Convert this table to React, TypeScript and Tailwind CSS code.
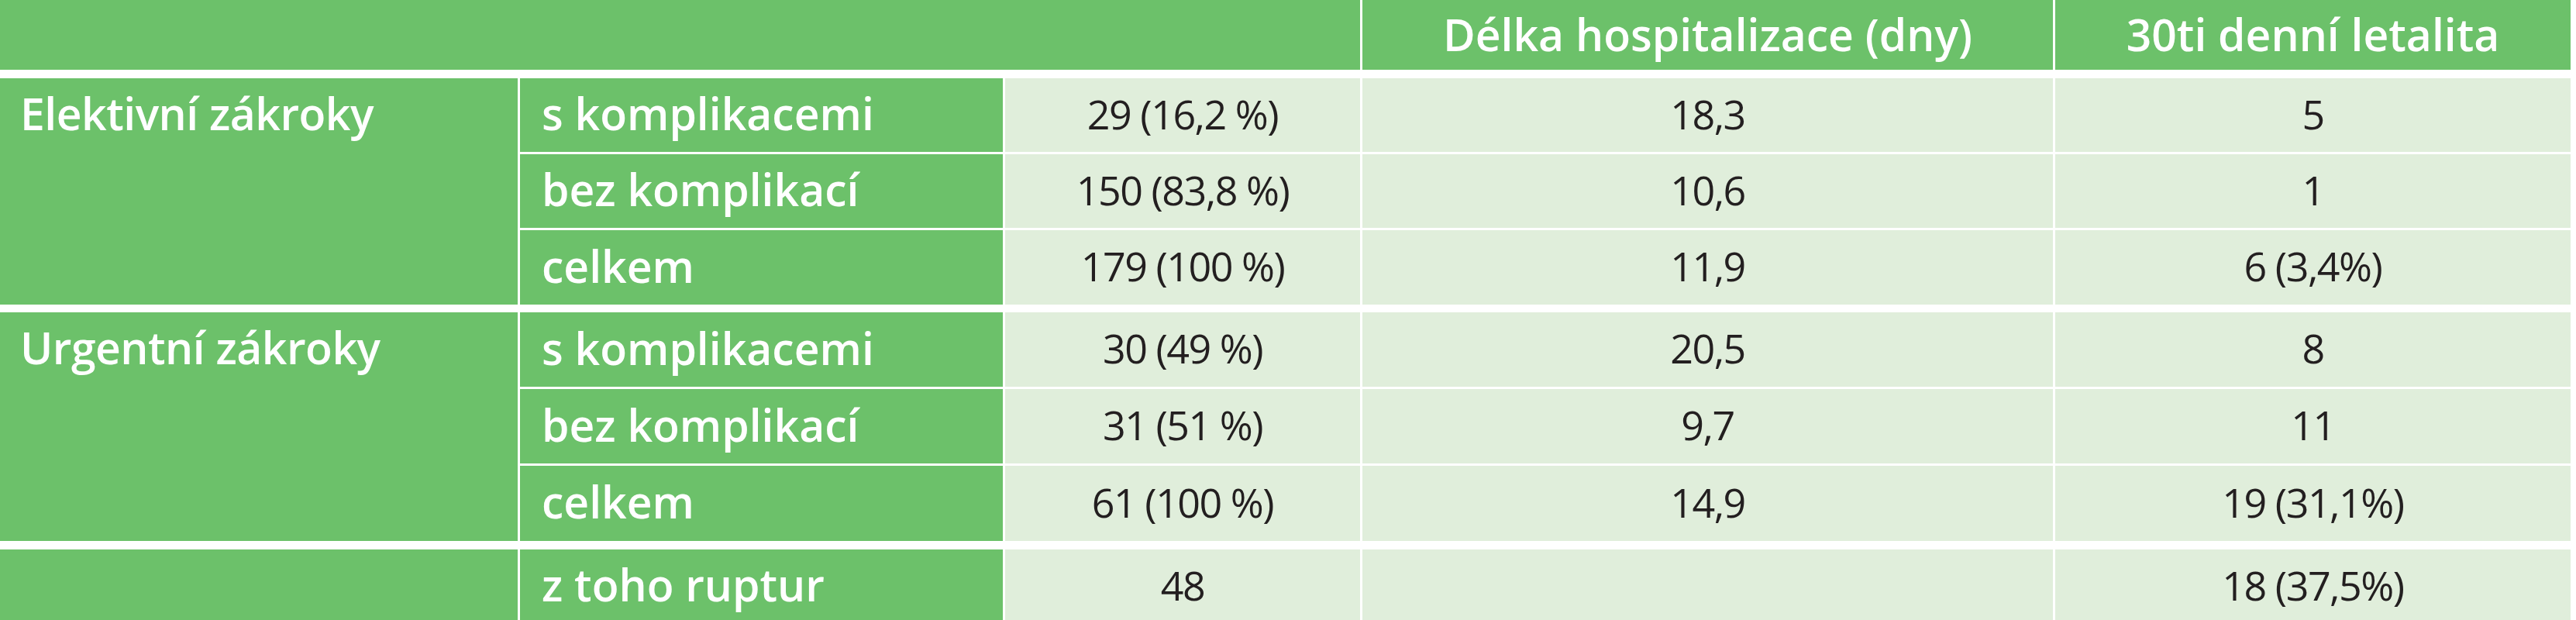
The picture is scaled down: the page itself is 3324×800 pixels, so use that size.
import React from "react";

type Row = { label: string; n: string; los: string; mort: string };

const groups: { title: string; rows: Row[] }[] = [
  {
    title: "Elektivní zákroky",
    rows: [
      { label: "s komplikacemi", n: "29 (16,2 %)", los: "18,3", mort: "5" },
      { label: "bez komplikací", n: "150 (83,8 %)", los: "10,6", mort: "1" },
      { label: "celkem", n: "179 (100 %)", los: "11,9", mort: "6 (3,4%)" },
    ],
  },
  {
    title: "Urgentní zákroky",
    rows: [
      { label: "s komplikacemi", n: "30 (49 %)", los: "20,5", mort: "8" },
      { label: "bez komplikací", n: "31 (51 %)", los: "9,7", mort: "11" },
      { label: "celkem", n: "61 (100 %)", los: "14,9", mort: "19 (31,1%)" },
    ],
  },
];

const labelCls =
  "bg-[#6cc16a] text-white font-semibold text-[57px] leading-none flex items-center pl-[28px] pb-[4px]";
const valCls =
  "bg-[#e0eedb] text-[#231f20] text-[52px] tracking-[-1.5px] leading-none flex items-center justify-center pb-[4px]";

function Group({ title, rows, heights }: { title: string; rows: Row[]; heights: string }) {
  return (
    <div className={`grid grid-cols-[668px_623px_458px_891px_665px] gap-[3px] ${heights}`}>
      <div className="row-span-3 bg-[#6cc16a] flex flex-col">
        <div className="h-[95px] flex items-center pl-[26px] pb-[4px] text-white font-semibold text-[57px] tracking-[-0.5px] leading-none">
          {title}
        </div>
      </div>
      {rows.map((r) => (
        <React.Fragment key={r.label}>
          <div className={labelCls}>{r.label}</div>
          <div className={valCls}>{r.n}</div>
          <div className={valCls}>{r.los}</div>
          <div className={valCls}>{r.mort}</div>
        </React.Fragment>
      ))}
    </div>
  );
}

export default function App() {
  return (
    <div className="w-[3324px] h-[800px] overflow-hidden bg-white font-['Open_Sans',sans-serif]">
      <div className="grid grid-cols-[1755px_891px_665px] gap-x-[3px] h-[90px]">
        <div className="bg-[#6cc16a]" />
        <div className="bg-[#6cc16a] text-white font-semibold text-[57px] leading-none flex items-center justify-center pb-[2px]">
          Délka hospitalizace (dny)
        </div>
        <div className="bg-[#6cc16a] text-white font-semibold text-[57px] leading-none flex items-center justify-center pb-[2px]">
          30ti denní letalita
        </div>
      </div>
      <div className="mt-[11px]">
        <Group title={groups[0].title} rows={groups[0].rows} heights="grid-rows-[95px_95px_96px]" />
      </div>
      <div className="mt-[10px]">
        <Group title={groups[1].title} rows={groups[1].rows} heights="grid-rows-[96px_96px_97px]" />
      </div>
      <div className="mt-[11px] grid grid-cols-[668px_623px_458px_891px_665px] gap-[3px] grid-rows-[95px]">
        <div className="bg-[#6cc16a]" />
        <div className={labelCls}>z toho ruptur</div>
        <div className={valCls}>48</div>
        <div className="bg-[#e0eedb]" />
        <div className={valCls}>18 (37,5%)</div>
      </div>
    </div>
  );
}
